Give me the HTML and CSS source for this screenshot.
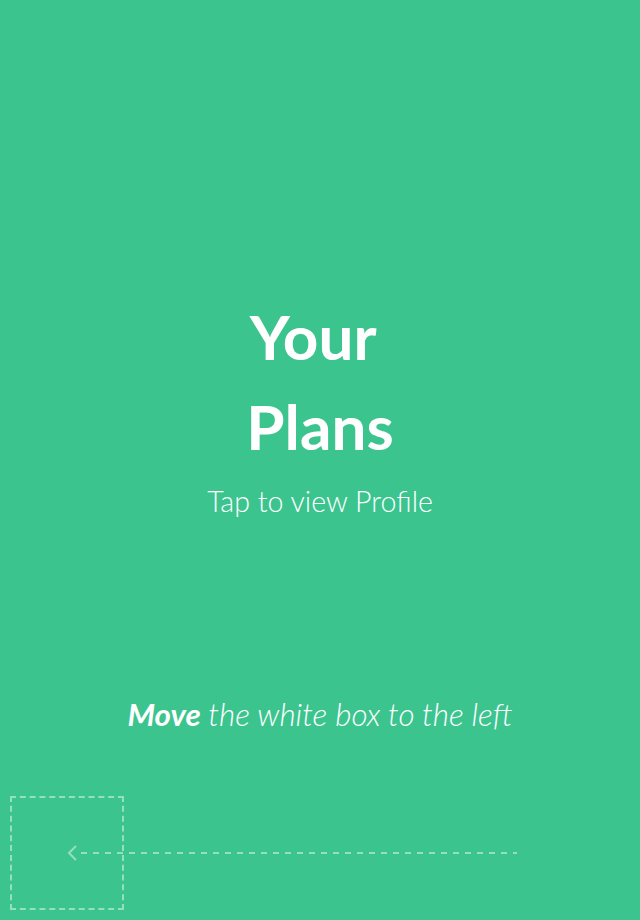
FILE: index.html
```html
<!DOCTYPE html>
<html>
<head>
<meta charset="utf-8">
<link rel="stylesheet" href="styles.css">
</head>
<body>
<main class="screen">
  <section class="hero">
    <h1 class="title">Your&nbsp;<br>Plans</h1>
    <p class="subtitle">Tap to view Profile</p>
  </section>
  <p class="hint"><strong>Move</strong> the white box to the left</p>
  <div class="track">
    <svg class="track-line" width="640" height="114" viewBox="0 0 640 114">
      <line x1="81" y1="57" x2="517" y2="57" stroke="rgba(255,255,255,0.45)" stroke-width="2" stroke-dasharray="6 6"/>
      <polyline points="76,50 69,57 76,64" fill="none" stroke="rgba(255,255,255,0.45)" stroke-width="2"/>
    </svg>
    <div class="drop-box"></div>
  </div>
</main>
</body>
</html>
```
FILE: styles.css
```css
html, body {
  margin: 0;
  padding: 0;
}
body {
  background: #3cc48f;
  font-family: Lato, "Open Sans", sans-serif;
  color: #fff;
  width: 640px;
  height: 920px;
  overflow: hidden;
}
.screen {
  display: flex;
  flex-direction: column;
  align-items: center;
  padding-top: 291px;
}
.hero {
  display: flex;
  flex-direction: column;
  align-items: center;
  text-align: center;
}
.title {
  margin: 0;
  font-size: 62px;
  font-weight: 700;
  line-height: 90px;
}
.subtitle {
  margin: 12px 0 0;
  font-size: 28.6px;
  font-weight: 300;
  line-height: 36px;
}
.hint {
  margin: 176px 0 0;
  font-size: 31.4px;
  font-style: italic;
  font-weight: 300;
  line-height: 38px;
}
.hint strong {
  font-weight: 700;
}
.track {
  position: relative;
  align-self: stretch;
  margin-top: 63px;
  height: 114px;
  display: flex;
}
.track-line {
  position: absolute;
  left: 0;
  top: 0;
}
.drop-box {
  position: relative;
  margin-left: 10px;
  width: 110px;
  height: 110px;
  border: 2px dashed rgba(255, 255, 255, 0.45);
}
```
